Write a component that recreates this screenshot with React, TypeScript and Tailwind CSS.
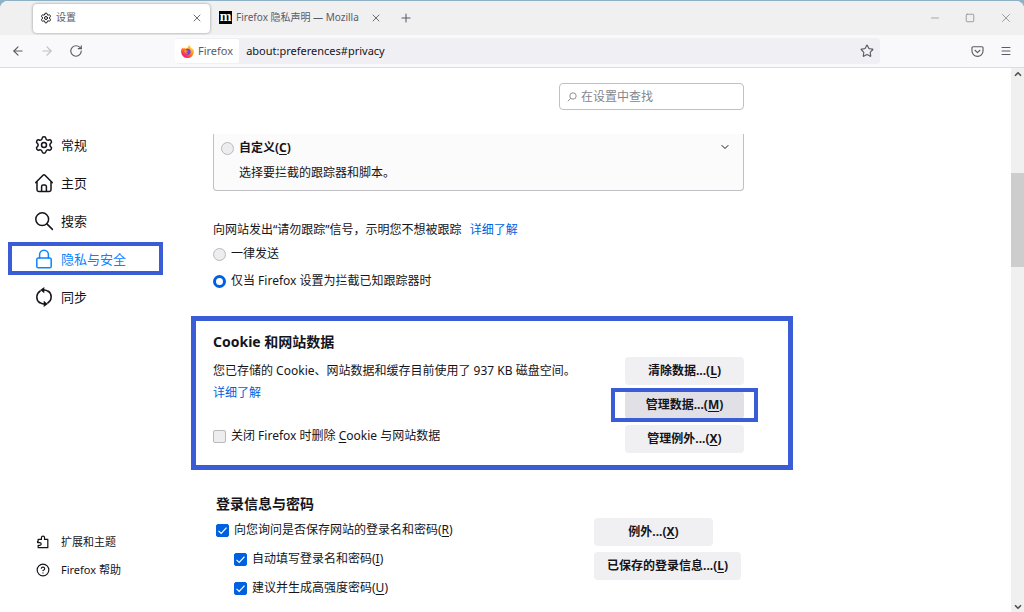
import { useState } from "react";
import type { ComponentProps, ReactNode } from "react";
import { clsx } from "clsx";
import {
  ArrowLeft,
  ArrowRight,
  ChevronDown,
  ChevronUp,
  CircleQuestionMark,
  Menu,
  Minus,
  Plus,
  RotateCw,
  Settings,
  Square,
  Star,
  X,
} from "lucide-react";

const FirefoxLogo = () => (
  <svg viewBox="0 0 16 16" className="block h-[13px] w-[13px]" aria-hidden="true">
    <defs>
      <linearGradient id="fx-flame" x1="0.85" y1="0.1" x2="0.2" y2="0.95">
        <stop offset="0" stopColor="#ffe14a" />
        <stop offset="0.4" stopColor="#ff9a1f" />
        <stop offset="0.7" stopColor="#ff4a3c" />
        <stop offset="1" stopColor="#e3168a" />
      </linearGradient>
    </defs>
    <path
      d="M15.6 6.2c-.4-1-1.2-2-1.8-2.3.4.9.7 1.6.8 2.3C13.6 3.8 11.7 2.9 10.3 0 8.8.9 8.2 2.6 8.1 3.7c-1 .1-1.9.4-2.6.9-.8-.2-1.3-.6-1.6-1.2-.8.3-1.2 1-1.3 1.7-.4-.4-.5-1.3-.4-2C.8 4.3.1 6.3.1 8.3a7.9 7.7 0 0 0 15.8 0c0-.7-.1-1.4-.3-2.1z"
      fill="url(#fx-flame)"
    />
    <circle cx="8.2" cy="8.2" r="3.7" fill="#7a3fe0" />
    <path d="M3.7 6.2c1.4-.8 2.7-.3 3.6.5 1 .1 1.5.3 1.5.8 0 .6-1.6.9-1.9 1.5-.1.7.6 1.300 1.500 1.400-1.500.8-3 .1-3.700-1-.6-.9-1.100-2-1-3.200z" fill="#ff8a1c" />
  </svg>
);

const CategoryIcon = ({ children }: { children: ReactNode }) => (
  <svg
    viewBox="0 0 20 20"
    className="block h-5 w-5 flex-none"
    fill="none"
    stroke="currentColor"
    strokeWidth="1.5"
    strokeLinecap="round"
    strokeLinejoin="round"
    aria-hidden="true"
  >
    {children}
  </svg>
);

const HomeIcon = () => (
  <CategoryIcon>
    <path d="M1.8 9.600L9 2.200a1.400 1.400 0 0 1 2 0l7.200 7.400M3 8.600v8.200A1.700 1.700 0 0 0 4.700 18.500h10.600a1.700 1.700 0 0 0 1.700-1.700V8.600" />
    <path d="M7.600 18.200v-4.700a1.500 1.500 0 0 1 1.500-1.500h1.800a1.500 1.500 0 0 1 1.500 1.500v4.700" />
  </CategoryIcon>
);

const SearchIcon = () => (
  <CategoryIcon>
    <circle cx="8.2" cy="8.2" r="6.4" />
    <path d="M12.9 12.9l5.500 5.500" />
  </CategoryIcon>
);

const LockIcon = () => (
  <CategoryIcon>
    <rect x="2.8" y="9" width="14.4" height="9.8" rx="1.6" />
    <path d="M5.600 9V5.600a4.400 4.400 0 0 1 8.800 0V9" />
  </CategoryIcon>
);

const SyncIcon = () => (
  <CategoryIcon>
    <path d="M5.600 15.800a7.200 7.200 0 0 1 .6-11.800M14.400 4.200a7.200 7.200 0 0 1-.6 11.800M10 3.100a7 7 0 0 1 4.400 1.600M10 16.900a7 7 0 0 1-4.400-1.600" />
    <path d="M10.300 0v6.200L6.200 3.100zM9.700 13.800V20l4.100-3.100z" fill="currentColor" stroke="none" />
  </CategoryIcon>
);

const SmallSearchIcon = () => (
  <svg viewBox="0 0 10 10" className="block h-2.5 w-2.5 flex-none text-[#8f8f95]" fill="none" stroke="currentColor" aria-hidden="true">
    <circle cx="6" cy="4" r="3.2" />
    <path d="M3.700 6.300L.8 9.200" />
  </svg>
);

const PuzzleIcon = () => (
  <svg viewBox="0 0 16 16" className="block h-3.5 w-3.5" fill="none" stroke="currentColor" strokeWidth="1.4" strokeLinejoin="round" aria-hidden="true">
    <path d="M2.500 7V5h3.700V3.200a1.800 1.800 0 0 1 3.600 0V5h3.700v9.500h-11v-2.700h1.800a1.500 1.500 0 0 0 0-3.200H1.800V7z" />
  </svg>
);

const PocketIcon = () => (
  <svg viewBox="0 0 16 16" className="block h-[13px] w-[13px]" fill="none" stroke="currentColor" strokeWidth="1.4" strokeLinecap="round" strokeLinejoin="round" aria-hidden="true">
    <path d="M2.500 2.200h11a1.300 1.300 0 0 1 1.300 1.300v4a6.800 6.500 0 0 1-13.600 0v-4a1.300 1.300 0 0 1 1.300-1.300z" />
    <path d="M5 6.500l3 2.900 3-2.900" />
  </svg>
);

const Key = ({ children }: { children: ReactNode }) => (
  <span className="underline decoration-1 underline-offset-2">{children}</span>
);

const Frame = ({ className }: { className: string }) => (
  <span aria-hidden="true" className={clsx("pointer-events-none absolute border-[#3a5cd6]", className)} />
);

const ActionButton = ({ className, ...props }: ComponentProps<"button">) => (
  <button
    type="button"
    className={clsx("h-7 min-w-[119px] rounded-sm px-[13px] text-xs leading-4 font-bold", className ?? "bg-[#f0f0f2]")}
    {...props}
  />
);

const Radio = ({ children, ...props }: ComponentProps<"input">) => (
  <label className="flex items-center gap-x-[5px]">
    <input
      type="radio"
      className="h-[13px] w-[13px] flex-none appearance-none rounded-full border border-[#b9b9bd] bg-[#ededf0] checked:border-[3px] checked:border-[#0061e0] checked:bg-white"
      {...props}
    />
    <span>{children}</span>
  </label>
);

const Checkbox = ({ children, ...props }: ComponentProps<"input">) => (
  <label className="flex items-center gap-x-[5px]">
    <span className="grid flex-none">
      <input
        type="checkbox"
        className="peer col-start-1 row-start-1 h-[13px] w-[13px] appearance-none rounded-xs border border-[#b9b9bd] bg-[#ededf0] checked:border-[#0061e0] checked:bg-[#0061e0]"
        {...props}
      />
      <svg
        viewBox="0 0 13 13"
        className="pointer-events-none invisible col-start-1 row-start-1 h-[13px] w-[13px] peer-checked:visible"
        fill="none"
        stroke="white"
        strokeWidth="1.2"
        aria-hidden="true"
      >
        <path d="M2.500 6.800l2.700 2.700 5.300-5.800" />
      </svg>
    </span>
    <span>{children}</span>
  </label>
);

const categories = [
  { id: "general", label: "常规", icon: <Settings className="h-5 w-5" strokeWidth={1.8} /> },
  { id: "home", label: "主页", icon: <HomeIcon /> },
  { id: "search", label: "搜索", icon: <SearchIcon /> },
  { id: "privacy", label: "隐私与安全", icon: <LockIcon /> },
  { id: "sync", label: "同步", icon: <SyncIcon /> },
];

const TabStrip = () => (
  <header className="flex h-[34px] flex-none items-center bg-[#f0f0f0] text-[10px] text-[#5b5b66]">
    <div className="ml-[33px] flex h-[29px] w-[177px] items-center rounded-sm bg-white px-[7px] shadow-[0_0_3px_rgba(0,0,0,0.4)]">
      <Settings className="h-3 w-3 text-[#15141a]" />
      <span className="ml-1 flex-1">设置</span>
      <button type="button" aria-label="关闭标签页">
        <X className="h-3 w-3" strokeWidth={1.8} />
      </button>
    </div>
    <div className="flex w-[172px] items-center pl-[9px]">
      <span className="flex h-[13px] w-[13px] flex-none items-center justify-center bg-black font-['Liberation_Serif',serif] text-sm leading-none font-bold text-white">
        <span className="pb-0.5">m</span>
      </span>
      <span className="ml-1 flex-1 whitespace-nowrap">Firefox 隐私声明 — Mozilla</span>
      <button type="button" aria-label="关闭标签页">
        <X className="h-3 w-3" strokeWidth={1.8} />
      </button>
    </div>
    <button type="button" aria-label="新建标签页" className="ml-[17px]">
      <Plus className="h-3.5 w-3.5" strokeWidth={1.8} />
    </button>
    <div className="ml-auto flex items-center gap-x-6 pr-[11px] text-[#8f8f95]">
      <button type="button" aria-label="最小化">
        <Minus className="h-3 w-3" strokeWidth={1.5} />
      </button>
      <button type="button" aria-label="最大化">
        <Square className="h-2.5 w-2.5" strokeWidth={2} />
      </button>
      <button type="button" aria-label="关闭">
        <X className="h-3.5 w-3.5" strokeWidth={1.5} />
      </button>
    </div>
  </header>
);

const Toolbar = () => (
  <div className="flex h-[33px] flex-none items-center border-b border-[#dcdce0] bg-[#f9f9fb] text-[#5b5b66]">
    <div className="flex flex-none items-center gap-x-[15px] pl-[11px]">
      <button type="button" aria-label="后退">
        <ArrowLeft className="h-3.5 w-3.5" />
      </button>
      <button type="button" aria-label="前进" className="text-[#bfbfc4]">
        <ArrowRight className="h-3.5 w-3.5" />
      </button>
      <button type="button" aria-label="刷新">
        <RotateCw className="h-3.5 w-3.5" />
      </button>
    </div>
    <div className="ml-[92px] flex h-[26px] flex-1 items-center rounded-sm bg-[#f0f0f4] pr-1.5">
      <div className="flex h-6 flex-none items-center gap-x-1 rounded-xs bg-white px-1.5 text-[11px]">
        <FirefoxLogo />
        <span>Firefox</span>
      </div>
      <input
        type="text"
        aria-label="地址栏"
        defaultValue="about:preferences#privacy"
        className="ml-[7px] min-w-0 flex-1 bg-transparent text-[11px] text-[#15141a]"
      />
      <button type="button" aria-label="为此页添加书签">
        <Star className="h-3.5 w-3.5" />
      </button>
    </div>
    <div className="ml-[91px] flex flex-none items-center gap-x-4 pr-3">
      <button type="button" aria-label="保存到 Pocket">
        <PocketIcon />
      </button>
      <button type="button" aria-label="打开应用程序菜单">
        <Menu className="h-3 w-3" />
      </button>
    </div>
  </div>
);

const Sidebar = () => {
  const [selected, setSelected] = useState("privacy");

  return (
    <aside className="flex w-[191px] flex-none flex-col justify-between pt-[60px] pb-[34px]">
      <nav className="flex flex-col gap-y-[5px] pr-7 pl-2 text-[13px] leading-5">
        {categories.map((category) => (
          <button
            key={category.id}
            type="button"
            onClick={() => {
              setSelected(category.id);
            }}
            className={clsx(
              "flex h-[33px] items-center gap-x-[7px] border-4 pl-[22px]",
              category.id === selected ? "border-[#3a5cd6] text-[#0a84ff]" : "border-transparent",
            )}
          >
            {category.icon}
            <span>{category.label}</span>
          </button>
        ))}
      </nav>
      <div className="flex flex-col gap-y-3 pl-9 text-[11px] leading-4">
        <a href="#addons" className="flex items-center gap-x-[11px]">
          <PuzzleIcon />
          <span>扩展和主题</span>
        </a>
        <a href="#help" className="flex items-center gap-x-[11px]">
          <CircleQuestionMark className="h-3.5 w-3.5" />
          <span>Firefox 帮助</span>
        </a>
      </div>
    </aside>
  );
};

const CookieSection = () => (
  <section className="flex items-start justify-between border-[5px] border-[#3a5cd6] pt-[11px] pr-11 pb-3 pl-[17px]">
    <div>
      <h2 className="text-sm leading-5 font-bold">Cookie 和网站数据</h2>
      <p className="mt-2 leading-[22px]">
        您已存储的 Cookie、网站数据和缓存目前使用了 937 KB 磁盘空间。
        <br />
        <a href="#cookies" className="text-[#0061e0]">
          详细了解
        </a>
      </p>
      <div className="mt-6">
        <Checkbox>
          关闭 Firefox 时删除 <Key>C</Key>ookie 与网站数据
        </Checkbox>
      </div>
    </div>
    <div className="mt-[25px] flex flex-none flex-col gap-y-1.5">
      <ActionButton>
        清除数据...(<Key>L</Key>)
      </ActionButton>
      <div className="relative flex flex-col">
        <ActionButton className="bg-[#e0e0e6]">
          管理数据...(<Key>M</Key>)
        </ActionButton>
        <Frame className="-inset-x-3.5 -inset-y-[3px] border-4" />
      </div>
      <ActionButton>
        管理例外...(<Key>X</Key>)
      </ActionButton>
    </div>
  </section>
);

const LoginSection = () => (
  <section className="mt-6 flex items-start justify-between pr-[52px] pl-[25px]">
    <div className="leading-[18px]">
      <h2 className="text-sm leading-5 font-bold">登录信息与密码</h2>
      <div className="mt-[7px] flex flex-col gap-y-[11px]">
        <Checkbox defaultChecked>
          向您询问是否保存网站的登录名和密码(<Key>R</Key>)
        </Checkbox>
        <div className="flex flex-col gap-y-[11px] pl-[18px]">
          <Checkbox defaultChecked>
            自动填写登录名和密码(<Key>I</Key>)
          </Checkbox>
          <Checkbox defaultChecked>
            建议并生成高强度密码(<Key>U</Key>)
          </Checkbox>
        </div>
      </div>
    </div>
    <div className="mt-6 flex flex-none flex-col items-start gap-y-1.5">
      <ActionButton>
        例外...(<Key>X</Key>)
      </ActionButton>
      <ActionButton>
        已保存的登录信息...(<Key>L</Key>)
      </ActionButton>
    </div>
  </section>
);

const App = () => {
  return (
    <div className="h-screen bg-[#8fb1c6] pt-px font-['Noto_Sans','Noto_Sans_CJK_SC',sans-serif] text-xs text-[#15141a]">
      <div className="flex h-full flex-col overflow-hidden rounded-t-lg bg-white">
        <TabStrip />
        <Toolbar />
        <div className="flex min-h-0 flex-1">
          <Sidebar />
          <main className="flex min-h-0 w-[602px] flex-none flex-col">
            <div className="flex flex-none justify-end pt-[15px] pr-[49px] pb-6">
              <label className="flex h-[27px] w-[185px] items-center gap-x-1 rounded-sm border border-[#bfbfc4] px-[7px]">
                <SmallSearchIcon />
                <input
                  type="search"
                  aria-label="在设置中查找"
                  placeholder="在设置中查找"
                  className="w-full min-w-0 bg-transparent text-xs outline-none placeholder:text-[#85858c]"
                />
              </label>
            </div>
            <div className="min-h-0 flex-1 overflow-hidden">
              <div className="mr-[49px] ml-[22px] flex items-start justify-between rounded-b-sm border border-t-0 border-[#bfbfc4] bg-[#fbfbfb] pt-1 pr-3 pb-[7px] pl-[7px]">
                <div>
                  <div className="leading-5 font-bold">
                    <Radio name="tracking">
                      自定义(<Key>C</Key>)
                    </Radio>
                  </div>
                  <p className="mt-[5px] pl-[18px] leading-5">选择要拦截的跟踪器和脚本。</p>
                </div>
                <button type="button" aria-label="展开" className="mt-[3px]">
                  <ChevronDown className="h-3 w-3" />
                </button>
              </div>
              <div className="mt-[29px] pl-[22px] leading-5">
                <p>
                  向网站发出“请勿跟踪”信号，示明您不想被跟踪
                  <a href="#dnt" className="ml-2 text-[#0061e0]">
                    详细了解
                  </a>
                </p>
                <div className="mt-1 flex flex-col gap-y-[7px]">
                  <Radio name="dnt">一律发送</Radio>
                  <Radio name="dnt" defaultChecked>
                    仅当 Firefox 设置为拦截已知跟踪器时
                  </Radio>
                </div>
              </div>
              <div className="mt-[25px]">
                <CookieSection />
              </div>
              <LoginSection />
            </div>
          </main>
          <div aria-hidden="true" className="ml-auto flex w-[13px] flex-none flex-col items-center bg-[#f0f0f0] text-[#505050]">
            <ChevronUp className="mt-px h-2.5 w-2.5" strokeWidth={4} />
            <div className="mt-[94px] h-[94px] w-full bg-[#cdcdcd]" />
            <ChevronDown className="mt-auto h-2.5 w-2.5" strokeWidth={4} />
          </div>
        </div>
      </div>
    </div>
  );
};

export default App;
